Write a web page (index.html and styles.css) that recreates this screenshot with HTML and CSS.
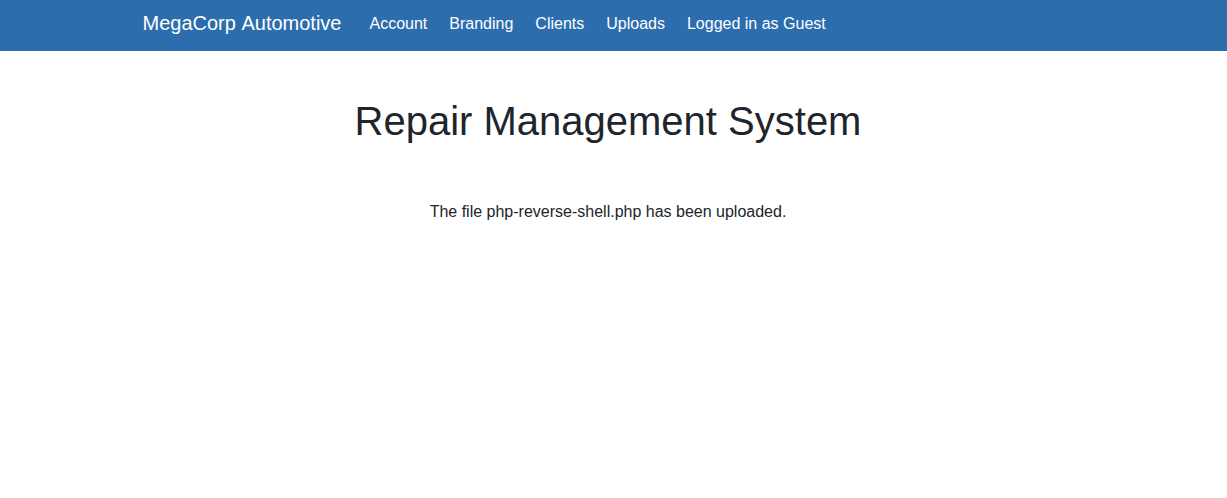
FILE: index.html
```html
<!DOCTYPE html>
<html lang="en">
<head>
<meta charset="utf-8">
<meta name="viewport" content="width=device-width, initial-scale=1">
<title>MegaCorp Automotive</title>
<link rel="stylesheet" href="styles.css">
</head>
<body>
<nav class="navbar">
  <div class="navbar-inner">
    <a class="brand" href="#">MegaCorp Automotive</a>
    <ul class="nav-list">
      <li><a class="nav-link" href="#">Account</a></li>
      <li><a class="nav-link" href="#">Branding</a></li>
      <li><a class="nav-link" href="#">Clients</a></li>
      <li><a class="nav-link" href="#">Uploads</a></li>
      <li><a class="nav-link" href="#">Logged in as Guest</a></li>
    </ul>
  </div>
</nav>
<main class="content">
  <h1 class="title">Repair Management System</h1>
  <p class="message">The file php-reverse-shell.php has been uploaded.</p>
</main>
</body>
</html>
```

FILE: styles.css
```css
* {
  box-sizing: border-box;
}

body {
  margin: 0;
  background: #fff;
  color: #212529;
  font-family: "Liberation Sans", Arial, sans-serif;
  font-size: 16px;
  line-height: 24px;
}

.navbar {
  padding: 4px 16px 7px;
  background: #2b6dad;
}

.navbar-inner {
  display: flex;
  align-items: center;
  max-width: 960px;
  margin: 0 auto;
  padding: 0 9px;
}

.brand {
  margin-right: 16px;
  padding-bottom: 2px;
  color: #fff;
  font-size: 20px;
  font-kerning: none;
  line-height: 30px;
  text-decoration: none;
  white-space: nowrap;
}

.nav-list {
  display: flex;
  gap: 22px;
  margin: 0;
  padding: 8px 12px;
  list-style: none;
}

.nav-link {
  color: #fff;
  text-decoration: none;
  white-space: nowrap;
}

.content {
  padding: 46px 27px 24px 16px;
  text-align: center;
}

.title {
  margin: 0;
  font-size: 40px;
  font-weight: 500;
  line-height: 48px;
}

.message {
  margin: 55px 0 0;
}
```
